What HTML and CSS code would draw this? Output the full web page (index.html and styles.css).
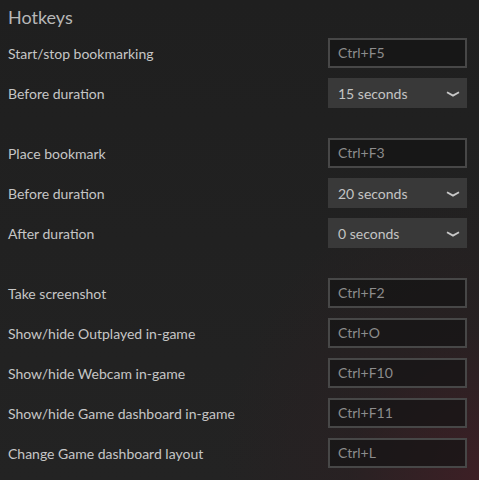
FILE: index.html
```html
<!DOCTYPE html>
<html>
<head>
<meta charset="utf-8">
<link rel="stylesheet" href="styles.css">
</head>
<body>
<div class="page">
  <h1 class="title">Hotkeys</h1>
  <div class="group">
    <div class="row"><span class="label">Start/stop bookmarking</span><div class="key">Ctrl+F5</div></div>
    <div class="row"><span class="label">Before duration</span><div class="select"><span>15 seconds</span><svg class="chev" width="14" height="6" viewBox="0 0 14 6"><path d="M1 1.2 L7 4.6 L13 1.2" fill="none" stroke="#c8c8c8" stroke-width="1.8"/></svg></div></div>
  </div>
  <div class="group">
    <div class="row"><span class="label">Place bookmark</span><div class="key">Ctrl+F3</div></div>
    <div class="row"><span class="label">Before duration</span><div class="select"><span>20 seconds</span><svg class="chev" width="14" height="6" viewBox="0 0 14 6"><path d="M1 1.2 L7 4.6 L13 1.2" fill="none" stroke="#c8c8c8" stroke-width="1.8"/></svg></div></div>
    <div class="row"><span class="label">After duration</span><div class="select"><span>0 seconds</span><svg class="chev" width="14" height="6" viewBox="0 0 14 6"><path d="M1 1.2 L7 4.6 L13 1.2" fill="none" stroke="#c8c8c8" stroke-width="1.8"/></svg></div></div>
  </div>
  <div class="group">
    <div class="row"><span class="label">Take screenshot</span><div class="key">Ctrl+F2</div></div>
    <div class="row"><span class="label">Show/hide Outplayed in-game</span><div class="key">Ctrl+O</div></div>
    <div class="row"><span class="label">Show/hide Webcam in-game</span><div class="key">Ctrl+F10</div></div>
    <div class="row"><span class="label">Show/hide Game dashboard in-game</span><div class="key">Ctrl+F11</div></div>
    <div class="row"><span class="label">Change Game dashboard layout</span><div class="key">Ctrl+L</div></div>
  </div>
</div>
</body>
</html>
```

FILE: styles.css
```css
html, body {
  margin: 0;
  padding: 0;
  height: 100%;
}
body {
  background-color: #202020;
  background-image:
    radial-gradient(ellipse 260px 300px at 100% 100%, rgba(70, 30, 38, 0.75) 0%, rgba(50, 30, 34, 0.35) 50%, rgba(32, 32, 32, 0) 100%),
    linear-gradient(180deg, #1f1f1f 0%, #232323 100%);
  font-family: Lato, "Open Sans", sans-serif;
  overflow: hidden;
}
.page {
  padding: 5px 12px 0 8px;
  display: flex;
  flex-direction: column;
  gap: 30px;
}
.title {
  margin: 0 0 -21px 0;
  font-size: 18px;
  font-weight: 400;
  line-height: 24px;
  color: #b8b8b8;
}
.group {
  display: flex;
  flex-direction: column;
  gap: 10px;
}
.row {
  display: flex;
  align-items: center;
  justify-content: space-between;
  height: 30px;
}
.label {
  font-size: 14px;
  color: #c6c6c6;
}
.key {
  box-sizing: border-box;
  width: 139px;
  height: 30px;
  border: 2px solid #474747;
  background: rgba(20, 20, 20, 0.7);
  color: #8c8c8c;
  font-size: 14px;
  line-height: 26px;
  padding-left: 8px;
}
.select {
  box-sizing: border-box;
  width: 139px;
  height: 30px;
  background: #393939;
  color: #c4c4c4;
  font-size: 14px;
  padding: 0 7px 0 10px;
  display: flex;
  align-items: center;
  justify-content: space-between;
}
.chev {
  display: block;
  margin-top: 2px;
}
```
